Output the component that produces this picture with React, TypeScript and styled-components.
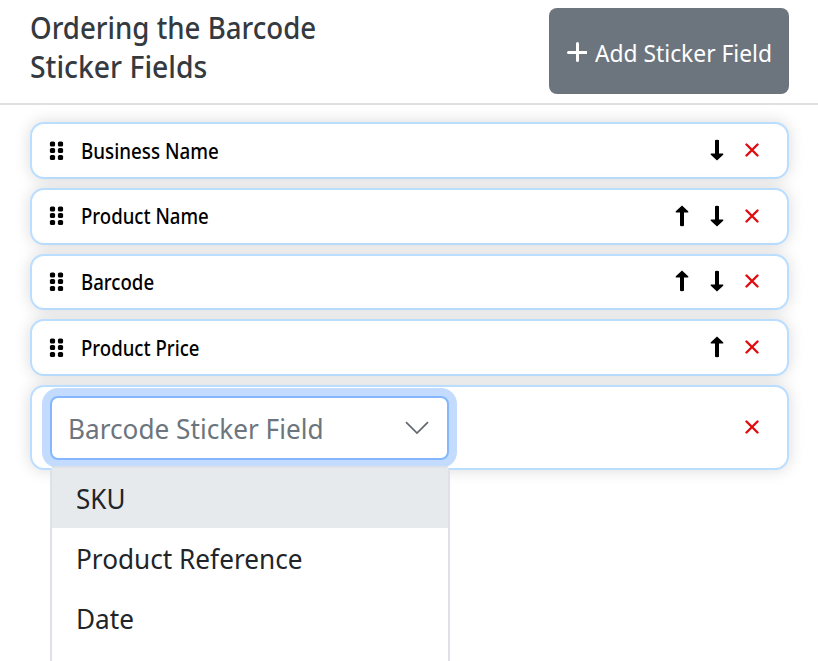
import React from 'react';
import styled, { createGlobalStyle, css } from 'styled-components';

const GlobalStyle = createGlobalStyle`
  * { box-sizing: border-box; }
  body {
    margin: 0;
    background: #fff;
    overflow: hidden;
    font-family: 'Noto Sans', 'Open Sans', sans-serif;
  }
  button { font-family: inherit; cursor: pointer; }
`;

const Panel = styled.main`
  height: 661px;
  overflow: hidden;
`;

const Header = styled.header`
  display: flex;
  justify-content: space-between;
  height: 105px;
  padding: 8px 29px 0 30px;
  border-bottom: 2px solid #dee0e1;
`;

const Fit = styled.span<{ $x: number }>`
  display: block;
  width: max-content;
  white-space: nowrap;
  transform: scaleX(${(p) => p.$x});
  transform-origin: 0 50%;
`;

const Title = styled.h5`
  margin: 0;
  font-size: 31px;
  line-height: 39px;
  font-weight: 500;
  color: #343a40;
`;

const AddButton = styled.button`
  display: flex;
  align-items: center;
  width: 240px;
  height: 86px;
  padding: 2px 0 0 18px;
  border: 0;
  border-radius: 8px;
  background: #6c757d;
  color: #fff;
  font-size: 24px;
  gap: 8px;

  svg { flex: none; }
`;

const List = styled.ul`
  display: flex;
  flex-direction: column;
  gap: 9.05px;
  margin: 0;
  padding: 17.4px 29px 0 30px;
  list-style: none;
`;

const Row = styled.li<{ $editing?: boolean }>`
  display: flex;
  align-items: center;
  height: ${(p) => (p.$editing ? '85px' : '56.6px')};
  padding: 0 28px 0 17px;
  border: 2px solid #badeff;
  border-radius: 14px;
  background: #fff;
  box-shadow: 0 0 16px rgba(0, 0, 0, 0.15);
  ${(p) => p.$editing && css`padding-left: 18px;`}
`;

const Label = styled.div`
  flex: 1;
  margin-left: 17px;
  font-size: 21px;
  line-height: 28px;
  font-weight: 500;
  color: #000;
`;

const Actions = styled.div`
  display: flex;
  align-items: center;
  gap: 21px;
  margin: 0 0 1px auto;
`;

const IconButton = styled.button`
  display: flex;
  padding: 0;
  border: 0;
  background: none;
`;

const SelectWrap = styled.div`
  position: relative;
  width: 399px;
  margin-top: 1px;
`;

const Select = styled.div`
  display: flex;
  align-items: center;
  justify-content: space-between;
  height: 64px;
  padding: 0 18px 0 16px;
  border: 2px solid #86b7fe;
  border-radius: 8px;
  background: #fff;
  box-shadow: 0 0 0 8px #c2dbfe;
  color: #6c757d;
  font-size: 28px;
`;

const Menu = styled.ul`
  position: absolute;
  z-index: 1;
  top: 70px;
  left: 0;
  width: 400px;
  height: 260px;
  margin: 0;
  padding: 0;
  list-style: none;
  border: 2px solid #dee2e6;
  border-radius: 6px 6px 8px 8px;
  background: #fff;
`;

const Option = styled.li<{ $active?: boolean }>`
  height: 60px;
  padding-left: 24px;
  color: #212529;
  font-size: 28px;
  line-height: 60px;
  ${(p) => p.$active && css`background: #e7eaed;`}
`;

const PlusIcon = () => (
  <svg width="20" height="20" viewBox="0 0 20 20" fill="none" stroke="#fff" strokeWidth="3" strokeLinecap="round">
    <path d="M10.5 1.5v17M1.5 10.5h18" />
  </svg>
);

const GripIcon = () => (
  <svg width="15" height="20" viewBox="0 0 15 20" fill="#000">
    {[3, 9.5, 16.5].map((y) =>
      [3.5, 11.5].map((x) => (
        <rect key={`${x}-${y}`} x={x - 2.6} y={y - 2.6} width="5.2" height="5.2" rx="1.7" />
      )),
    )}
  </svg>
);

const ArrowIcon = ({ up = false }: { up?: boolean }) => (
  <svg width="14" height="22" viewBox="0 0 14 22" fill="#000">
    <path
      transform={up ? undefined : 'rotate(180 7 11)'}
      d="M7 .4 13.2 6.2Q13.9 7.6 12.6 7.6H9V20.4Q9 21.2 7 21.2Q5 21.2 5 20.4V7.6H1.4Q.1 7.6 .8 6.2Z"
    />
  </svg>
);

const RemoveIcon = () => (
  <svg width="14" height="14" viewBox="0 0 14 14" fill="none" stroke="#df0d12" strokeWidth="2.4" strokeLinecap="round">
    <path d="M1.5 1.5l11 11M12.5 1.5l-11 11" />
  </svg>
);

const ChevronIcon = () => (
  <svg width="24" height="14" viewBox="0 0 24 14" fill="none" stroke="#62686e" strokeWidth="1.7">
    <path d="M1 1.2 12 12 23 1.2" />
  </svg>
);

const fields = [
  { name: 'Business Name', scale: 0.894 },
  { name: 'Product Name', scale: 0.885 },
  { name: 'Barcode', scale: 0.887 },
  { name: 'Product Price', scale: 0.885 },
];

const options = [
  { name: 'SKU', scale: 0.93 },
  { name: 'Product Reference', scale: 0.935 },
  { name: 'Date', scale: 0.935 },
];

export default function App() {
  return (
    <>
      <GlobalStyle />
      <Panel>
        <Header>
          <Title>
            <Fit $x={0.892}>Ordering the Barcode</Fit>
            <Fit $x={0.914}>Sticker Fields</Fit>
          </Title>
          <AddButton>
            <PlusIcon />
            <Fit $x={0.95}>Add Sticker Field</Fit>
          </AddButton>
        </Header>
        <List>
          {fields.map((field, i) => (
            <Row key={field.name}>
              <GripIcon />
              <Label>
                <Fit $x={field.scale}>{field.name}</Fit>
              </Label>
              <Actions>
                {i > 0 && (
                  <IconButton aria-label="Move up"><ArrowIcon up /></IconButton>
                )}
                {i < fields.length - 1 && (
                  <IconButton aria-label="Move down"><ArrowIcon /></IconButton>
                )}
                <IconButton aria-label="Remove"><RemoveIcon /></IconButton>
              </Actions>
            </Row>
          ))}
          <Row $editing>
            <SelectWrap>
              <Select>
                <Fit $x={0.935}>Barcode Sticker Field</Fit>
                <ChevronIcon />
              </Select>
              <Menu>
                {options.map((option, i) => (
                  <Option key={option.name} $active={i === 0}>
                    <Fit $x={option.scale}>{option.name}</Fit>
                  </Option>
                ))}
              </Menu>
            </SelectWrap>
            <Actions>
              <IconButton aria-label="Remove"><RemoveIcon /></IconButton>
            </Actions>
          </Row>
        </List>
      </Panel>
    </>
  );
}
